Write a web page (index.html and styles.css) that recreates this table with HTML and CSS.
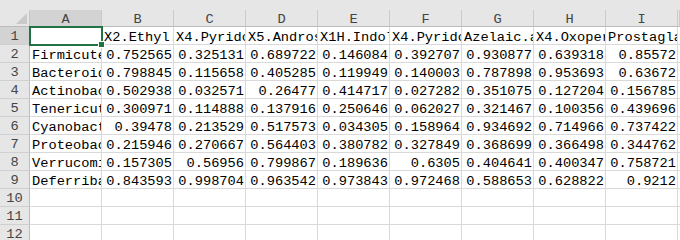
FILE: index.html
```html
<!DOCTYPE html>
<html>
<head>
<meta charset="utf-8">
<link rel="stylesheet" href="styles.css">
</head>
<body>
<div class="sheet">
  <div class="strip"></div>
  <div class="row colhead">
    <div class="corner"><span class="tri"></span></div>
    <div class="ch on">A</div><div class="ch">B</div><div class="ch">C</div><div class="ch">D</div><div class="ch">E</div><div class="ch">F</div><div class="ch">G</div><div class="ch">H</div><div class="ch">I</div><div class="ch"></div>
  </div>
  <div class="row">
    <div class="rh on">1</div>
    <div class="c sel"><span class="selbox"><span class="handle"></span></span></div>
    <div class="c">X2.Ethyl.hexanoic.acid</div><div class="c">X4.Pyridoxic.acid</div><div class="c">X5.Androstenediol</div><div class="c">X1H.Indole.3.acetic</div><div class="c">X4.Pyridoxal.phosphate</div><div class="c">Azelaic.acid</div><div class="c">X4.Oxoperhydro</div><div class="c">Prostaglandin</div><div class="c"></div>
  </div>
  <div class="row">
    <div class="rh">2</div><div class="c">Firmicutes</div>
    <div class="c n">0.752565</div><div class="c n">0.325131</div><div class="c n">0.689722</div><div class="c n">0.146084</div><div class="c n">0.392707</div><div class="c n">0.930877</div><div class="c n">0.639318</div><div class="c n">0.85572</div><div class="c"></div>
  </div>
  <div class="row">
    <div class="rh">3</div><div class="c">Bacteroidetes</div>
    <div class="c n">0.798845</div><div class="c n">0.115658</div><div class="c n">0.405285</div><div class="c n">0.119949</div><div class="c n">0.140003</div><div class="c n">0.787898</div><div class="c n">0.953693</div><div class="c n">0.63672</div><div class="c"></div>
  </div>
  <div class="row">
    <div class="rh">4</div><div class="c">Actinobacteria</div>
    <div class="c n">0.502938</div><div class="c n">0.032571</div><div class="c n">0.26477</div><div class="c n">0.414717</div><div class="c n">0.027282</div><div class="c n">0.351075</div><div class="c n">0.127204</div><div class="c n">0.156785</div><div class="c"></div>
  </div>
  <div class="row">
    <div class="rh">5</div><div class="c">Tenericutes</div>
    <div class="c n">0.300971</div><div class="c n">0.114888</div><div class="c n">0.137916</div><div class="c n">0.250646</div><div class="c n">0.062027</div><div class="c n">0.321467</div><div class="c n">0.100356</div><div class="c n">0.439696</div><div class="c"></div>
  </div>
  <div class="row">
    <div class="rh">6</div><div class="c">Cyanobacteria</div>
    <div class="c n">0.39478</div><div class="c n">0.213529</div><div class="c n">0.517573</div><div class="c n">0.034305</div><div class="c n">0.158964</div><div class="c n">0.934692</div><div class="c n">0.714966</div><div class="c n">0.737422</div><div class="c"></div>
  </div>
  <div class="row">
    <div class="rh">7</div><div class="c">Proteobacteria</div>
    <div class="c n">0.215946</div><div class="c n">0.270667</div><div class="c n">0.564403</div><div class="c n">0.380782</div><div class="c n">0.327849</div><div class="c n">0.368699</div><div class="c n">0.366498</div><div class="c n">0.344762</div><div class="c"></div>
  </div>
  <div class="row">
    <div class="rh">8</div><div class="c">Verrucomicrobia</div>
    <div class="c n">0.157305</div><div class="c n">0.56956</div><div class="c n">0.799867</div><div class="c n">0.189636</div><div class="c n">0.6305</div><div class="c n">0.404641</div><div class="c n">0.400347</div><div class="c n">0.758721</div><div class="c"></div>
  </div>
  <div class="row">
    <div class="rh">9</div><div class="c">Deferribacteres</div>
    <div class="c n">0.843593</div><div class="c n">0.998704</div><div class="c n">0.963542</div><div class="c n">0.973843</div><div class="c n">0.972468</div><div class="c n">0.588653</div><div class="c n">0.628822</div><div class="c n">0.9212</div><div class="c"></div>
  </div>
  <div class="row">
    <div class="rh">10</div><div class="c"></div><div class="c"></div><div class="c"></div><div class="c"></div><div class="c"></div><div class="c"></div><div class="c"></div><div class="c"></div><div class="c"></div><div class="c"></div>
  </div>
  <div class="row">
    <div class="rh">11</div><div class="c"></div><div class="c"></div><div class="c"></div><div class="c"></div><div class="c"></div><div class="c"></div><div class="c"></div><div class="c"></div><div class="c"></div><div class="c"></div>
  </div>
  <div class="row">
    <div class="rh">12</div><div class="c"></div><div class="c"></div><div class="c"></div><div class="c"></div><div class="c"></div><div class="c"></div><div class="c"></div><div class="c"></div><div class="c"></div><div class="c"></div>
  </div>
</div>
</body>
</html>
```
FILE: styles.css
```css
html, body {
  margin: 0;
  padding: 0;
  background: #ffffff;
  overflow: hidden;
}
.sheet {
  width: 680px;
  height: 240px;
  overflow: hidden;
  font-family: "Liberation Mono", "DejaVu Sans Mono", monospace;
  font-size: 13.7px;
  color: #000;
}
.strip {
  height: 10px;
  background: #e6e6e6;
}
.row {
  display: grid;
  grid-template-columns: 30px repeat(9, 72px) 1fr;
  height: 18px;
}
.colhead {
  height: 17px;
  background: #e6e6e6;
}
.corner {
  position: relative;
  border-right: 1px solid #c4c4c4;
  border-bottom: 1px solid #bcbcbc;
  box-sizing: border-box;
}
.tri {
  position: absolute;
  right: 2px;
  bottom: 2px;
  width: 0;
  height: 0;
  border-left: 11px solid transparent;
  border-bottom: 11px solid #c9c9c9;
}
.ch {
  box-sizing: border-box;
  border-right: 1px solid #cacaca;
  border-bottom: 1px solid #bcbcbc;
  text-align: center;
  line-height: 19px;
  color: #444;
  overflow: hidden;
}
.ch.on {
  background: #d3d3d3;
}
.rh {
  box-sizing: border-box;
  background: #e6e6e6;
  border-right: 1px solid #bcbcbc;
  border-bottom: 1px solid #d0d0d0;
  text-align: center;
  line-height: 20px;
  color: #444;
  overflow: hidden;
}
.rh.on {
  background: #d3d3d3;
}
.c {
  box-sizing: border-box;
  border-right: 1px solid #d9d9d9;
  border-bottom: 1px solid #d9d9d9;
  padding: 0 1px 0 2px;
  white-space: nowrap;
  overflow: hidden;
  line-height: 22px;
}
.c.n {
  text-align: right;
}
.c.sel {
  position: relative;
  overflow: visible;
}
.selbox {
  position: absolute;
  left: -1px;
  top: -1px;
  width: 74px;
  height: 20px;
  box-sizing: border-box;
  border: 2px solid #217346;
  z-index: 2;
}
.handle {
  position: absolute;
  right: -4px;
  bottom: -4px;
  width: 5px;
  height: 5px;
  background: #217346;
  border: 1px solid #ffffff;
}
```
